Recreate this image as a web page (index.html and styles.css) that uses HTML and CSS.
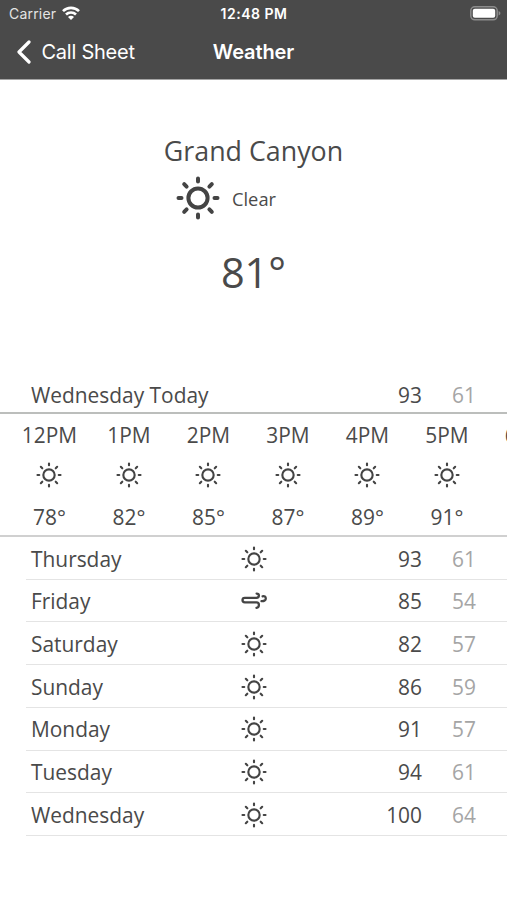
FILE: index.html
```html
<!DOCTYPE html>
<html lang="en">
<head>
    <meta charset="UTF-8">
    <meta name="viewport" content="width=device-width, initial-scale=1.0">
    <title>Weather</title>
    <link rel="stylesheet" href="styles.css">
</head>
<body>
    <svg class="sprite">
        <symbol id="sun" viewBox="0 0 44 44">
            <circle cx="22" cy="22" r="9.6"/>
            <path d="M22 2.5v3M22 38.5v3M2.5 22h3M38.5 22h3M8.2 8.2l2.4 2.4M33.4 33.4l2.4 2.4M8.2 35.8l2.4-2.4M33.4 10.6l2.4-2.4"/>
        </symbol>
        <symbol id="wind" viewBox="0 0 26 18">
            <path d="M15.6 1.6c1.5 0 2.3.8 2.3 2 0 1.4-1 2.2-2.4 2.2H3.8a2.1 2.1 0 0 0 0 4.6h11.7c1.4 0 2.4.9 2.4 2.5 0 1.4-.9 2.7-2.4 2.9M20.5 9.2c2.6.2 4.3-1 4.3-2.8 0-1.6-1.4-2.6-3.2-2.1"/>
        </symbol>
    </svg>

    <header>
        <div class="status-bar">
            <div class="carrier">
                <span>Carrier</span>
                <svg class="wifi" viewBox="0 0 18 14">
                    <path d="M1 5.2a11.3 11.3 0 0 1 16 0M4 8.5a7.1 7.1 0 0 1 10 0"/>
                    <path class="dot" d="M9 14l-3-3.1a4.2 4.2 0 0 1 6 0z"/>
                </svg>
            </div>
            <div class="clock">12:48 PM</div>
            <svg class="battery" viewBox="0 0 31 15">
                <rect class="shell" x=".8" y=".8" width="26.4" height="13" rx="4"/>
                <rect class="charge" x="2.8" y="2.8" width="22.4" height="9" rx="2"/>
                <path class="tip" d="M28.6 5v4.6c1.2-.5 1.8-1.3 1.8-2.3s-.6-1.8-1.8-2.3z"/>
            </svg>
        </div>
        <nav>
            <div class="back">
                <svg class="chevron" viewBox="0 0 16 24"><path d="M13 2L3 12l10 10"/></svg>
                <span>Call Sheet</span>
            </div>
            <h1>Weather</h1>
        </nav>
    </header>

    <section class="current">
        <h2>Grand Canyon</h2>
        <div class="condition">
            <svg class="sun-large"><use href="#sun"/></svg>
            <span>Clear</span>
        </div>
        <div class="temperature">81°</div>
    </section>

    <div class="today">
        <span class="day">Wednesday Today</span>
        <span class="high">93</span>
        <span class="low">61</span>
    </div>

    <div class="hourly">
        <div class="hour"><span>12PM</span><svg class="icon"><use href="#sun"/></svg><span>78°</span></div>
        <div class="hour"><span>1PM</span><svg class="icon"><use href="#sun"/></svg><span>82°</span></div>
        <div class="hour"><span>2PM</span><svg class="icon"><use href="#sun"/></svg><span>85°</span></div>
        <div class="hour"><span>3PM</span><svg class="icon"><use href="#sun"/></svg><span>87°</span></div>
        <div class="hour"><span>4PM</span><svg class="icon"><use href="#sun"/></svg><span>89°</span></div>
        <div class="hour"><span>5PM</span><svg class="icon"><use href="#sun"/></svg><span>91°</span></div>
        <div class="hour"><span>6PM</span></div>
    </div>

    <div class="daily">
        <div class="row"><span class="day">Thursday</span><svg class="icon"><use href="#sun"/></svg><span class="high">93</span><span class="low">61</span></div>
        <div class="row"><span class="day">Friday</span><svg class="icon wind"><use href="#wind"/></svg><span class="high">85</span><span class="low">54</span></div>
        <div class="row"><span class="day">Saturday</span><svg class="icon"><use href="#sun"/></svg><span class="high">82</span><span class="low">57</span></div>
        <div class="row"><span class="day">Sunday</span><svg class="icon"><use href="#sun"/></svg><span class="high">86</span><span class="low">59</span></div>
        <div class="row"><span class="day">Monday</span><svg class="icon"><use href="#sun"/></svg><span class="high">91</span><span class="low">57</span></div>
        <div class="row"><span class="day">Tuesday</span><svg class="icon"><use href="#sun"/></svg><span class="high">94</span><span class="low">61</span></div>
        <div class="row"><span class="day">Wednesday</span><svg class="icon"><use href="#sun"/></svg><span class="high">100</span><span class="low">64</span></div>
    </div>
</body>
</html>
```
FILE: styles.css
```css
* {
    box-sizing: border-box;
}
body {
    margin: 0;
    height: 900px;
    overflow: hidden;
    background: #fff;
    color: #4a4a4a;
    font-family: "Open Sans", sans-serif;
    font-size: 20.9px;
}
svg {
    display: block;
    fill: none;
    stroke: #444;
    stroke-linecap: round;
    stroke-linejoin: round;
}
.sprite {
    display: none;
}
header {
    height: 80px;
    background: #4a4a4a;
    border-bottom: 1px solid #a5a5a5;
    color: #fff;
    font-family: Inter, sans-serif;
}
.status-bar {
    display: grid;
    grid-template-columns: 1fr auto 1fr;
    align-items: center;
    height: 27px;
    padding: 0 6px 0 9px;
    font-size: 14px;
}
.carrier {
    display: flex;
    align-items: center;
    gap: 6px;
    color: #e4e4e4;
    letter-spacing: 0.2px;
}
.wifi {
    width: 18px;
    height: 14px;
    margin-top: -2px;
    stroke: #fff;
    stroke-width: 2.6;
    stroke-linecap: butt;
}
.wifi .dot {
    fill: #fff;
    stroke: none;
}
.clock {
    margin-right: 2px;
    font-weight: 600;
    letter-spacing: 0.5px;
}
.battery {
    justify-self: end;
    width: 31px;
    height: 15px;
}
.shell {
    stroke: #8c8c8c;
    stroke-width: 1.5;
}
.charge {
    fill: #fff;
    stroke: none;
}
.tip {
    fill: #8c8c8c;
    stroke: none;
}
nav {
    display: grid;
    grid-template-columns: 1fr auto 1fr;
    align-items: center;
    height: 50px;
    padding: 0 16px;
}
.back {
    display: flex;
    align-items: center;
    gap: 9.5px;
    font-size: 20px;
    letter-spacing: -0.25px;
}
.chevron {
    width: 16px;
    height: 24px;
    stroke: #fff;
    stroke-width: 3.2;
}
h1 {
    margin: 0;
    font-size: 20px;
    font-weight: 600;
    letter-spacing: -0.1px;
}
.current {
    display: flex;
    flex-direction: column;
    align-items: center;
    height: 297px;
    padding-top: 51px;
}
h2 {
    margin: 0;
    font-size: 26.8px;
    font-weight: 400;
    line-height: 40px;
}
.condition {
    display: flex;
    align-items: center;
    gap: 12px;
    height: 44px;
    margin: 5px 55px 0 0;
    font-size: 18.3px;
}
.sun-large {
    width: 44px;
    height: 44px;
    stroke-width: 4;
}
.temperature {
    margin-top: 22px;
    font-size: 41.5px;
    line-height: 60px;
}
.today {
    display: flex;
    align-items: center;
    height: 37px;
    padding: 0 31px;
    border-bottom: 2px solid #bcbebc;
}
.day {
    flex: 1;
}
.high {
    width: 60px;
    text-align: right;
}
.low {
    width: 54px;
    text-align: right;
    color: #a5a5a5;
}
.hourly {
    display: flex;
    height: 123px;
    padding-left: 9.7px;
    border-bottom: 2px solid #d0d0d0;
    overflow: hidden;
}
.hour {
    display: flex;
    flex: 0 0 79.5px;
    flex-direction: column;
    align-items: center;
    line-height: 30px;
    padding-top: 6px;
}
.icon {
    width: 26px;
    height: 26px;
    stroke-width: 3.6;
}
.hour .icon {
    margin: 12px 0 14px;
}
.icon.wind {
    height: 18px;
    stroke-width: 2.3;
}
.daily {
    margin-left: 26px;
}
.row {
    display: grid;
    grid-template-columns: 210px 1fr 60px 54px;
    align-items: center;
    height: 42.72px;
    padding: 1.5px 31px 0 5px;
    border-bottom: 1px solid #e4e4e4;
}
```
